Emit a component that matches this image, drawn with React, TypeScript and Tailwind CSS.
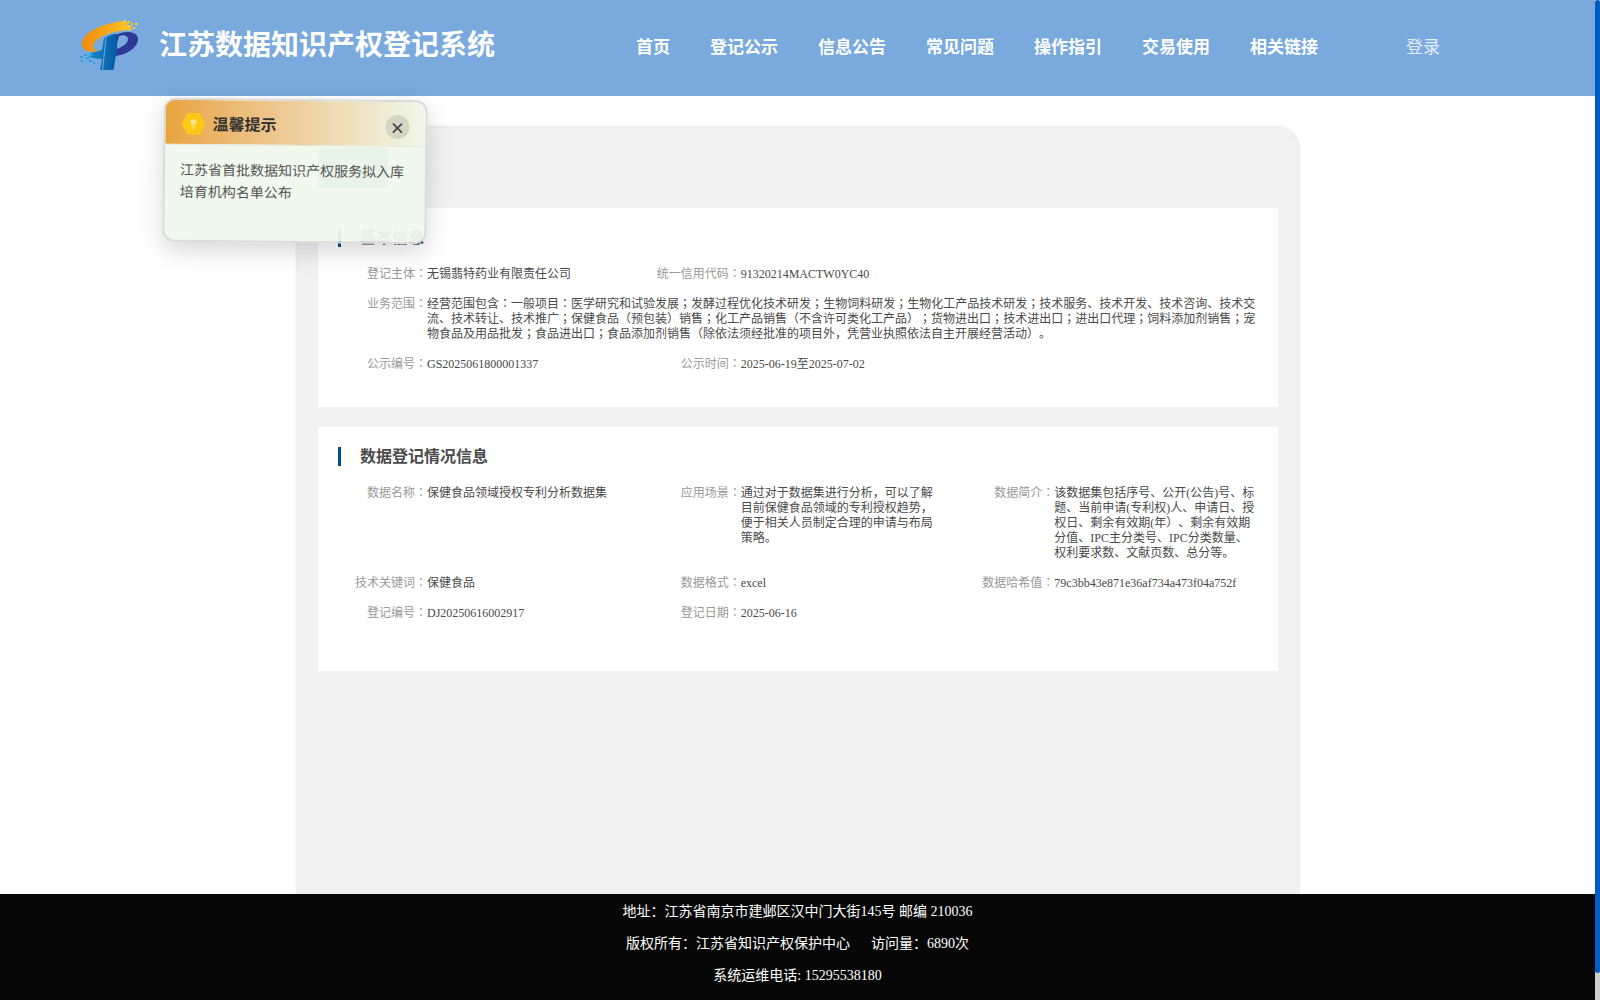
import React from "react";
import { Lightbulb, X } from "lucide-react";

const NAV = ["首页", "登记公示", "信息公告", "常见问题", "操作指引", "交易使用", "相关链接"];

type Item = { label: string; lines: string[]; wide?: boolean };

const BASIC: Item[][] = [
  [
    { label: "登记主体", lines: ["无锡翡特药业有限责任公司"] },
    { label: "统一信用代码", lines: ["91320214MACTW0YC40"] },
  ],
  [
    {
      label: "业务范围",
      wide: true,
      lines: [
        "经营范围包含：一般项目：医学研究和试验发展；发酵过程优化技术研发；生物饲料研发；生物化工产品技术研发；技术服务、技术开发、技术咨询、技术交",
        "流、技术转让、技术推广；保健食品（预包装）销售；化工产品销售（不含许可类化工产品）；货物进出口；技术进出口；进出口代理；饲料添加剂销售；宠",
        "物食品及用品批发；食品进出口；食品添加剂销售（除依法须经批准的项目外，凭营业执照依法自主开展经营活动）。",
      ],
    },
  ],
  [
    { label: "公示编号", lines: ["GS2025061800001337"] },
    { label: "公示时间", lines: ["2025-06-19至2025-07-02"] },
  ],
];

const DATA: Item[][] = [
  [
    { label: "数据名称", lines: ["保健食品领域授权专利分析数据集"] },
    {
      label: "应用场景",
      lines: ["通过对于数据集进行分析，可以了解", "目前保健食品领域的专利授权趋势，", "便于相关人员制定合理的申请与布局", "策略。"],
    },
    {
      label: "数据简介",
      lines: [
        "该数据集包括序号、公开(公告)号、标",
        "题、当前申请(专利权)人、申请日、授",
        "权日、剩余有效期(年）、剩余有效期",
        "分值、IPC主分类号、IPC分类数量、",
        "权利要求数、文献页数、总分等。",
      ],
    },
  ],
  [
    { label: "技术关键词", lines: ["保健食品"] },
    { label: "数据格式", lines: ["excel"] },
    { label: "数据哈希值", lines: ["79c3bb43e871e36af734a473f04a752f"] },
  ],
  [
    { label: "登记编号", lines: ["DJ20250616002917"] },
    { label: "登记日期", lines: ["2025-06-16"] },
  ],
];

// Colons and semicolons are set centred in their full-width cell.
function Text({ children }: { children: string }) {
  return (
    <>
      {children.split(/([：；])/).map((part, i) =>
        i % 2 ? (
          <span key={i} className="font-['Noto_Sans_CJK_TC',sans-serif] leading-[0]">
            {part}
          </span>
        ) : (
          part
        ),
      )}
    </>
  );
}

function Card({ title, rows, className }: { title: string; rows: Item[][]; className: string }) {
  return (
    <section className={`bg-white pt-5 pl-5 ${className}`}>
      <div className="flex h-[19px] items-center border-l-3 border-[#004e90] pl-[19px] text-base leading-[19px] font-bold text-[#4a4a4a]">
        {title}
      </div>
      <div className="mt-5 -ml-px flex flex-col gap-[15px] text-xs leading-[15px]">
        {rows.map((row, i) => (
          <div key={i} className="grid grid-cols-3">
            {row.map((item) => (
              <div key={item.label} className={item.wide ? "col-span-3 flex" : "flex"}>
                <div className="h-[15px] w-[90px] shrink-0 text-right whitespace-nowrap text-[#999]">
                  <Text>{item.label + "："}</Text>
                </div>
                <div className="whitespace-nowrap text-[#4a4a4a] [text-spacing-trim:space-all]">
                  {item.lines.map((line) => (
                    <div key={line} className="h-[15px]">
                      <Text>{line}</Text>
                    </div>
                  ))}
                </div>
              </div>
            ))}
          </div>
        ))}
      </div>
    </section>
  );
}

function Logo() {
  return (
    <svg viewBox="0 0 60 52" className="h-[52px] w-[60px]">
      <defs>
        <linearGradient id="arc" x1="0" x2="1">
          <stop offset="0" stopColor="#f28a0c" />
          <stop offset="1" stopColor="#fdc928" />
        </linearGradient>
        <linearGradient id="stem" x1="0" x2="1">
          <stop offset="0" stopColor="#168ccd" />
          <stop offset="1" stopColor="#075aa5" />
        </linearGradient>
      </defs>
      <path d="M44 1C28 2 2 11 2 24c0 7 8 9 18 7-8 0-9-7-2-12 8-6 22-9 35-9l-3-2 2-2-5-1 2-2z" fill="url(#arc)" />
      <path d="M44 0h2v2h-2zM48 1h2v2h-2zM51 3h2v2h-2zM48 5h2v2h-2zM55 3h3v2h-3zM53 7h2v2h-2z" fill="#fcd02b" />
      <path d="M36 15c9-5 22-4 22 4 0 9-12 16-23 17l1-7c7-2 12-6 12-10 0-3-4-5-9-3l-3 12z" fill="#2e3995" />
      <path d="M24 18c4-2 8-4 13-4v15l-3 18c0 3-1 3-3 3H20l2-11c-6 0-11-1-14-3l5-1-3-2c5-1 9-2 12-3z" fill="url(#stem)" />
      <path d="M26 17l-3.500 34" stroke="#79a9dd" strokeWidth="1" />
      <path d="M0 36h3v2H0zM4 34h3v2H4zM6 37h3v2H6zM1 40h2v2H1zM9 40h3v2H9zM13 42h2v2h-2zM9 34h4v2H9z" fill="#26a0da" />
    </svg>
  );
}

function Notice() {
  return (
    <aside className="absolute top-[99px] left-[163px] z-10 h-[144px] w-[264px] rotate-[0.6deg] overflow-hidden rounded-xl border-2 border-[#d9dbd9] bg-[#f0f8ec]/95 bg-clip-padding shadow-[0_8px_24px_rgba(0,0,0,0.16)]">
      <div className="flex h-[45px] items-center border-b border-[#e8e8d8] bg-linear-to-r from-[#e8a33d] to-[#f0f8ec] pt-1 pr-4 pl-4">
        <div className="flex h-[22px] w-6 items-center justify-center bg-[#fdc816] [clip-path:polygon(25%_0,75%_0,100%_50%,75%_100%,25%_100%,0_50%)]">
          <Lightbulb className="size-[10px] fill-[#fbe58a] text-[#fdf0b5]" />
        </div>
        <div className="ml-[7px] flex-1 pt-0.5 text-base leading-6 font-bold text-[#333]">温馨提示</div>
        <div className="mt-0.5 flex size-6 items-center justify-center rounded-full bg-[#d4d5c2]">
          <X className="mt-0.5 size-[16px] text-[#444]" strokeWidth={2.6} />
        </div>
      </div>
      <div className="px-[15px] pt-[15px] text-sm leading-[22px] whitespace-nowrap text-[#555]">
        <div>江苏省首批数据知识产权服务拟入库</div>
        <div>培育机构名单公布</div>
      </div>
    </aside>
  );
}

export default function App() {
  return (
    <div className="relative flex h-[1000px] w-[1600px] overflow-hidden bg-white font-['Liberation_Serif','Noto_Sans_CJK_SC',serif]">
      <div className="flex w-[1595px] flex-col">
        <header className="flex h-24 shrink-0 bg-[#79a9dd] pl-20 text-white">
          <div className="w-[60px] pt-5">
            <Logo />
          </div>
          <h1 className="ml-[19px] w-[477px] text-[28px] leading-[91px] font-bold">江苏数据知识产权登记系统</h1>
          <nav className="flex gap-10 text-[17px] leading-[96px] font-bold whitespace-nowrap">
            {NAV.map((name) => (
              <a key={name}>{name}</a>
            ))}
          </nav>
          <a className="ml-[88px] text-[17px] leading-[96px] text-white/80">登录</a>
        </header>
        <main className="mt-8 ml-[298px] flex h-[766px] w-[1000px] shrink-0 flex-col rounded-t-[20px] bg-[#f1f1f1] px-5 pt-5 shadow-[0_0_4px_rgba(0,0,0,0.2)]">
          <div className="flex h-10 w-[70px] items-center justify-center rounded bg-[#4fa8c8] text-sm text-white">返回</div>
          <Card title="基本信息" rows={BASIC} className="mt-5 h-[199px]" />
          <Card title="数据登记情况信息" rows={DATA} className="mt-5 h-[244px]" />
        </main>
        <footer className="relative h-[106px] shrink-0 bg-[#070707] pt-0.5 text-center text-sm leading-8 whitespace-pre text-white">
          <div>地址：江苏省南京市建邺区汉中门大街145号 邮编 210036</div>
          <div>{"版权所有：江苏省知识产权保护中心\u00a0\u00a0\u00a0\u00a0\u00a0\u00a0访问量：6890次"}</div>
          <div>系统运维电话: 15295538180</div>
        </footer>
      </div>
      <div className="w-[5px] bg-[#cfcfcf]">
        <div className="h-[973px] rounded-full bg-[#005bc5]" />
      </div>
      <Notice />
    </div>
  );
}
